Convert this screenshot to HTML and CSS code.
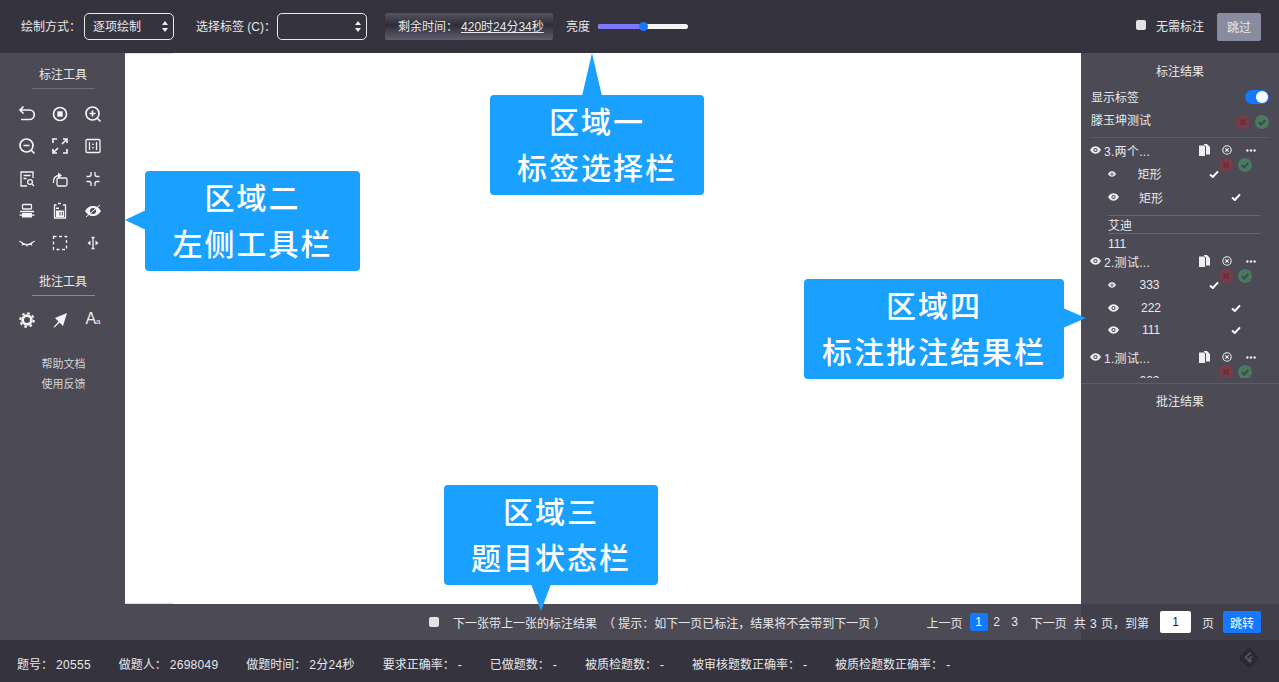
FILE: index.html
```html
<!DOCTYPE html>
<html lang="zh-CN">
<head>
<meta charset="utf-8">
<title>标注工具</title>
<link rel="stylesheet" href="styles.css">
</head>
<body>
<svg class="defs" width="0" height="0" aria-hidden="true">
  <symbol id="eye" viewBox="0 0 12 8"><path d="M0 4C2 .8 4 0 6 0s4 .8 6 4c-2 3.2-4 4-6 4S2 7.200 0 4z" fill="#eee"/><circle cx="6" cy="4" r="2.300" fill="#4b4a55"/><circle cx="6" cy="4" r="1.200" fill="#eee"/></symbol>
  <symbol id="check" viewBox="0 0 10 8"><path d="M1 4.500l2.800 2.500L9 1.300" fill="none" stroke="#fff" stroke-width="2"/></symbol>
  <symbol id="copy" viewBox="0 0 11 12"><path d="M0 1.500h5l1 1V12H0z" fill="#eee"/><path d="M5 0h3l3 3v7.500H7V2.500L5 1z" fill="#eee"/></symbol>
  <symbol id="close" viewBox="0 0 10 10"><circle cx="5" cy="5" r="4.200" fill="none" stroke="#eee" stroke-width="1.100"/><path d="M3.300 3.300l3.400 3.400M6.700 3.300l-3.400 3.400" stroke="#eee" stroke-width="1.200"/></symbol>
  <symbol id="more" viewBox="0 0 10 3"><circle cx="1.400" cy="1.500" r="1.200" fill="#eee"/><circle cx="5" cy="1.500" r="1.200" fill="#eee"/><circle cx="8.600" cy="1.500" r="1.200" fill="#eee"/></symbol>
  <symbol id="no" viewBox="0 0 14 14"><circle cx="7" cy="7" r="7" fill="#7c3a46"/><path d="M4.500 4.500l5 5M9.500 4.500l-5 5" stroke="#5a3640" stroke-width="2"/></symbol>
  <symbol id="yes" viewBox="0 0 14 14"><circle cx="7" cy="7" r="7" fill="#4c7a60"/><path d="M3.800 7.200l2.300 2.300 4.200-4.500" fill="none" stroke="#3b4a48" stroke-width="2"/></symbol>
</svg>

<div class="app">
  <header class="topbar">
    <span class="label">绘制方式：</span>
    <div class="select select-mode"><span>逐项绘制</span><i class="updown"></i></div>
    <span class="label label-tag">选择标签 (C)：</span>
    <div class="select select-tag"><span></span><i class="updown"></i></div>
    <div class="timer"><span>剩余时间：</span><u>420时24分34秒</u></div>
    <span class="label label-light">亮度</span>
    <div class="slider"><div class="slider-fill"></div><div class="slider-knob"></div></div>
    <div class="spacer"></div>
    <span class="check-box"></span>
    <span class="label label-none">无需标注</span>
    <button class="skip">跳过</button>
  </header>

  <main class="workspace">
    <aside class="left">
      <div class="tool-title">标注工具</div>
      <div class="tools">
        <svg class="ti" viewBox="0 0 18 18"><path d="M5.500 1.500L2 5l3.500 3.500M2 5h9.500a4.500 4.500 0 0 1 0 9.500H3"/></svg>
        <svg class="ti" viewBox="0 0 18 18"><circle cx="9" cy="9" r="6.500"/><rect class="f" x="6.300" y="6.300" width="5.400" height="5.400"/></svg>
        <svg class="ti" viewBox="0 0 18 18"><circle cx="8.500" cy="8.500" r="6.500"/><path d="M8.500 5.500v6M5.500 8.500h6M13 13l3.500 3.500"/></svg>
        <svg class="ti" viewBox="0 0 18 18"><circle cx="8.500" cy="8.500" r="6.500"/><path d="M5.500 8.500h6M13 13l3.500 3.500"/></svg>
        <svg class="ti" viewBox="0 0 18 18"><path d="M2 6V2h4M12 2h4v4M16 12v4h-4M6 16H2v-4M11 7l4-4M7 11l-4 4"/></svg>
        <svg class="ti ti-thin" viewBox="0 0 18 18"><rect x="2" y="2.500" width="14" height="13" rx="1"/><path d="M5.500 5v8M12.500 5v8"/><path class="d" d="M9 6.500v1.500M9 10v1.500"/></svg>
        <svg class="ti ti-thin" viewBox="0 0 18 18"><path d="M15 8V2H3v14h6M5.500 5.500h7M5.500 8.500h3"/><circle cx="12" cy="12" r="2.400"/><path d="M14 14l2 2"/></svg>
        <svg class="ti ti-thin" viewBox="0 0 18 18"><rect x="6" y="8" width="10" height="8" rx="1.500"/><path d="M2.500 13v-2a6 6 0 0 1 5-5.500"/><path class="f" d="M7 2.500L11 5.500 7 8.200z"/></svg>
        <svg class="ti ti-thin" viewBox="0 0 18 18"><path d="M7 2v2.500a2 2 0 0 1-2 2H2.500M11 2v2.500a2 2 0 0 0 2 2h2.500M7 16v-2.500a2 2 0 0 0-2-2H2.500M11 16v-2.500a2 2 0 0 1 2-2h2.500"/></svg>
        <svg class="ti ti-thin" viewBox="0 0 18 18"><rect x="4.500" y="2.500" width="9" height="4.500" rx=".8"/><rect class="f" x="4" y="11" width="10" height="4.500"/><path d="M2 9.500h14M1.500 13.200h15"/></svg>
        <svg class="ti ti-thin" viewBox="0 0 18 18"><path d="M7 1.500h3M3.500 5V3h2M12 3h2.500v13h-11V5"/><path class="f" d="M5 5.500h3V7H5zM5 8.500h8V15H5z"/><rect class="hole" x="8.500" y="10" width="1" height="3.500"/><rect class="hole" x="10.800" y="10" width="1" height="3.500"/></svg>
        <svg class="ti" viewBox="0 0 18 18"><path class="f" d="M1 9c2.500-4 5-5 8-5s5.500 1 8 5c-2.500 4-5 5-8 5s-5.500-1-8-5z"/><circle class="hole" cx="9" cy="9" r="3"/><path class="thin-line" d="M2 15L16 3"/></svg>
        <svg class="ti ti-thin" viewBox="0 0 18 18"><path d="M3 8c3 3.600 9 3.600 12 0M2.500 8L1.500 7M15.500 8l1-1M5 10.200l-.8 1.200M13 10.200l.8 1.200M9 11.200v1.300"/></svg>
        <svg class="ti ti-thin" viewBox="0 0 18 18"><path class="dash" d="M2.500 2.500h13v13h-13z"/></svg>
        <svg class="ti ti-thin" viewBox="0 0 18 18"><path d="M9 3.500v11M7.500 3.500h3M7.500 14.500h3"/><path class="f" d="M6.500 6.500L3.500 9l3 2.500zM11.500 6.500L14.500 9l-3 2.500z"/></svg>
      </div>
      <div class="tool-title tool-title-second">批注工具</div>
      <div class="tools tools-second">
        <svg class="ti" viewBox="0 0 18 18"><circle class="gear-teeth" cx="9" cy="9" r="6.800"/><circle class="gear-ring" cx="9" cy="9" r="4.400"/></svg>
        <svg class="ti" viewBox="0 0 18 18"><path class="f" d="M16 2L4 7l3.500 3.500L2.500 16l1 .5 5-5L12 15z"/></svg>
        <span class="aa">A<small>a</small></span>
      </div>
      <a class="help help-first">帮助文档</a>
      <a class="help">使用反馈</a>
    </aside>

    <section class="canvas"></section>

    <aside class="right">
      <div class="right-title">标注结果</div>
      <div class="switch-row"><span>显示标签</span><span class="toggle"></span></div>
      <div class="owner-row"><span>滕玉坤测试</span>
        <span class="marks"><svg class="mark"><use href="#no"/></svg><svg class="mark"><use href="#yes"/></svg></span></div>
      <div class="tree">
        <div class="group">
          <div class="head"><svg class="eye"><use href="#eye"/></svg><span class="head-name">3.两个...</span><svg class="a-copy"><use href="#copy"/></svg><svg class="a-close"><use href="#close"/></svg><svg class="a-more"><use href="#more"/></svg></div>
          <span class="group-marks"><svg class="mark"><use href="#no"/></svg><svg class="mark"><use href="#yes"/></svg></span>
          <div class="row row-first"><svg class="eye-s"><use href="#eye"/></svg><span class="name">矩形</span><svg class="tick"><use href="#check"/></svg></div>
          <div class="row row-next"><svg class="eye"><use href="#eye"/></svg><span class="name">矩形</span><svg class="tick"><use href="#check"/></svg></div>
          <div class="meta meta-line">艾迪</div>
          <div class="meta meta-short">111</div>
        </div>
        <div class="group">
          <div class="head"><svg class="eye"><use href="#eye"/></svg><span class="head-name">2.测试...</span><svg class="a-copy"><use href="#copy"/></svg><svg class="a-close"><use href="#close"/></svg><svg class="a-more"><use href="#more"/></svg></div>
          <span class="group-marks"><svg class="mark"><use href="#no"/></svg><svg class="mark"><use href="#yes"/></svg></span>
          <div class="row row-first"><svg class="eye-s"><use href="#eye"/></svg><span class="name">333</span><svg class="tick"><use href="#check"/></svg></div>
          <div class="row row-next"><svg class="eye"><use href="#eye"/></svg><span class="name">222</span><svg class="tick"><use href="#check"/></svg></div>
          <div class="row row-next row-tight"><svg class="eye"><use href="#eye"/></svg><span class="name">111</span><svg class="tick"><use href="#check"/></svg></div>
        </div>
        <div class="group group-last">
          <div class="head"><svg class="eye"><use href="#eye"/></svg><span class="head-name">1.测试...</span><svg class="a-copy"><use href="#copy"/></svg><svg class="a-close"><use href="#close"/></svg><svg class="a-more"><use href="#more"/></svg></div>
          <span class="group-marks"><svg class="mark"><use href="#no"/></svg><svg class="mark"><use href="#yes"/></svg></span>
          <div class="row row-first"><svg class="eye-s"><use href="#eye"/></svg><span class="name">222</span><svg class="tick"><use href="#check"/></svg></div>
        </div>
      </div>
      <div class="note-title">批注结果</div>
    </aside>

    <div class="pager">
      <span class="check-box"></span>
      <span class="carry">下一张带上一张的标注结果</span>
      <span class="hint">（ 提示：如下一页已标注，结果将不会带到下一页 ）</span>
      <span class="spacer"></span>
      <span class="pg-text">上一页</span>
      <span class="pg-num pg-on">1</span>
      <span class="pg-num">2</span>
      <span class="pg-num">3</span>
      <span class="pg-text pg-next">下一页</span>
      <span class="pg-total">共 3 页，到第</span>
      <span class="pg-input">1</span>
      <span class="pg-unit">页</span>
      <button class="pg-go">跳转</button>
    </div>

    <div class="callout callout-top"><div>区域一</div><div>标签选择栏</div></div>
    <div class="callout callout-left"><div>区域二</div><div>左侧工具栏</div></div>
    <div class="callout callout-bottom"><div>区域三</div><div>题目状态栏</div></div>
    <div class="callout callout-right"><div>区域四</div><div>标注批注结果栏</div></div>
  </main>

  <footer class="footer">
    <span class="stat"><span>题号：</span><b>20555</b></span>
    <span class="stat"><span>做题人：</span><b>2698049</b></span>
    <span class="stat"><span>做题时间：</span><b>2分24秒</b></span>
    <span class="stat"><span>要求正确率：</span><b>-</b></span>
    <span class="stat"><span>已做题数：</span><b>-</b></span>
    <span class="stat"><span>被质检题数：</span><b>-</b></span>
    <span class="stat"><span>被审核题数正确率：</span><b>-</b></span>
    <span class="stat"><span>被质检题数正确率：</span><b>-</b></span>
    <svg class="logo" viewBox="0 0 24 24"><rect x="4.500" y="4.500" width="15" height="15" rx="2" transform="rotate(45 12 12)" fill="#2b2a32"/><path d="M13.500 6.500L8.500 11.500l5 5M15 10.500l-3 2.500 3 2.500" fill="none" stroke="#5a5964" stroke-width="1.500"/></svg>
  </footer>
</div>
</body>
</html>
```
FILE: styles.css
```css
* { box-sizing: border-box; }
html, body { margin: 0; height: 100%; }
body {
  font-family: "Liberation Sans", "Noto Sans CJK SC", sans-serif;
  font-size: 12px;
  color: #e8e8ea;
  background: #35333e;
  overflow: hidden;
}
.defs { position: absolute; }
.app { height: 682px; display: flex; flex-direction: column; }
.spacer { flex: 1; }

/* top bar */
.topbar {
  height: 53px;
  flex: none;
  display: flex;
  align-items: center;
  padding: 0 18px 0 21px;
  background: #35333e;
}
.label { white-space: nowrap; margin-top: -2px; }
.select {
  width: 90px;
  height: 27px;
  margin-left: 3px;
  padding: 0 8px;
  display: flex;
  align-items: center;
  justify-content: space-between;
  border: 1px solid #e8e8ea;
  border-radius: 5px;
}
.select span { margin-top: -2px; }
.label-tag { margin-left: 22px; }
.select-tag { margin-left: 1px; }
.updown { display: block; width: 6px; height: 11px; margin-right: -3px; position: relative; }
.updown::before, .updown::after {
  content: "";
  position: absolute;
  left: 0;
  border-left: 3px solid transparent;
  border-right: 3px solid transparent;
}
.updown::before { top: 0; border-bottom: 4px solid #eee; }
.updown::after { bottom: 0; border-top: 4px solid #eee; }
.timer {
  width: 168px;
  height: 27px;
  margin-left: 18px;
  padding: 0 0 2px 13px;
  display: flex;
  align-items: center;
  gap: 3px;
  border-radius: 2px;
  background: linear-gradient(#55535f 0%, #2f2e38 45%, #4a4856 75%, #605e70 100%);
}
.label-light { margin-left: 13px; }
.slider { width: 90px; height: 5px; margin-left: 8px; position: relative; background: #f4f4f4; border-radius: 3px; }
.slider-fill { width: 46px; height: 5px; background: #7b78ff; border-radius: 3px 0 0 3px; }
.slider-knob { position: absolute; left: 41px; top: -2px; width: 9px; height: 9px; border-radius: 50%; background: #1677ff; }
.check-box { width: 10px; height: 10px; flex: none; background: #e3e3e3; border-radius: 2px; }
.topbar .check-box { margin-top: -3px; }
.label-none { margin-left: 10px; }
.skip {
  width: 44px;
  height: 28px;
  margin-left: 13px;
  padding: 0;
  border: 0;
  border-radius: 2px;
  color: #e8e8ea;
  background: #878ca0;
  font: inherit;
}

/* work area */
.workspace {
  position: relative;
  height: 587px;
  flex: none;
  display: grid;
  grid-template-columns: 125px 956px 198px;
  grid-template-rows: 551px 36px;
}
.left { grid-row: 1 / 3; background: #4b4a55; display: flex; flex-direction: column; align-items: center; }
.tool-title {
  width: 63px;
  margin: 14px 0 0 1px;
  height: 22px;
  line-height: 17px;
  text-align: center;
  border-bottom: 1px solid #6e6d78;
}
.tool-title-second { margin-top: 15px; border-bottom-color: #8a8993; }
.tools {
  width: 99px;
  margin: 9px 5px 0 0;
  display: grid;
  grid-template-columns: repeat(3, 33px);
  grid-auto-rows: 32.25px;
  place-items: center;
}
.tools-second { margin-top: 8px; margin-bottom: 17px; }
.ti { width: 18px; height: 18px; fill: none; stroke: #f4f4f4; stroke-width: 1.700; }
.ti-thin { stroke-width: 1.300; }
.ti .f { fill: #f4f4f4; stroke: none; }
.ti .hole { fill: #4b4a55; stroke: none; }
.ti .d { stroke-width: 1.500; }
.ti .dash { stroke-dasharray: 3 2.500; }
.ti .thin-line { stroke-width: 1; }
.ti .gear-teeth { stroke-width: 2; stroke-dasharray: 2.670 2.670; }
.ti .gear-ring { stroke-width: 2.800; }
.aa { font-size: 16px; line-height: 18px; color: #eee; }
.aa small { font-size: 8px; }
.help { display: block; height: 20px; line-height: 20px; margin-left: 2px; font-size: 11px; color: #d4d4d8; }

.canvas { background: #fff; position: relative; }
.canvas::before, .canvas::after {
  content: "";
  position: absolute;
  left: 0;
  width: 48px;
  height: 1px;
  background: #dcdcdf;
}
.canvas::before { top: 0; }
.canvas::after { bottom: 0; }

/* results panel */
.right { background: #4b4a55; padding-left: 10px; display: flex; flex-direction: column; }
.right-title { height: 36px; line-height: 38px; text-align: center; padding-right: 10px; }
.switch-row {
  height: 15px;
  padding-right: 10px;
  display: flex;
  align-items: center;
  justify-content: space-between;
}
.owner-row {
  height: 34px;
  margin-right: 10px;
  padding: 2px 0 4px;
  position: relative;
  display: flex;
  align-items: center;
  border-bottom: 1px solid #5d5c67;
}
.toggle { width: 24px; height: 14px; border-radius: 7px; background: #1677ff; position: relative; }
.toggle::after { content: ""; position: absolute; right: 1px; top: 1px; width: 12px; height: 12px; border-radius: 50%; background: #fff; }
.marks { position: absolute; left: 145px; top: 11px; display: flex; gap: 5px; }
.mark { width: 14px; height: 14px; display: block; }
.tree { height: 241px; margin: -1px 0 0 -10px; overflow: hidden; flex: none; }
.group { position: relative; }
.head { height: 26px; padding-left: 9px; display: flex; align-items: center; }
.head-name { margin-left: 3px; width: 95px; letter-spacing: .3px; }
.eye { width: 11px; height: 8px; flex: none; }
.eye-s { width: 8px; height: 6px; flex: none; }
.a-copy { width: 11px; height: 12px; flex: none; }
.a-close { width: 10px; height: 10px; margin-left: 12px; flex: none; }
.a-more { width: 10px; height: 3px; margin-left: 14px; flex: none; }
.group-marks { position: absolute; left: 138px; top: 21px; display: flex; gap: 5px; }
.row { display: flex; align-items: center; margin-left: 27px; }
.row-first { height: 21px; }
.row-first .name { width: 67px; text-align: center; }
.row-first .tick { margin-left: 26px; }
.row-next { height: 24px; margin-top: 1px; }
.row-next .name { width: 64px; text-align: center; }
.row-next .tick { margin-left: 48px; }
.row-tight { height: 20px; margin-top: 0; }
.tick { width: 10px; height: 8px; flex: none; }
.name { display: block; }
.meta { margin: 0 19px 0 27px; line-height: 17px; }
.meta-line { margin-top: 6px; height: 19px; padding-top: 1px; line-height: 18px; border-top: 1px solid #65646f; border-bottom: 1px solid #65646f; }
.meta-short { height: 14px; line-height: 20px; }
.group-last { margin-top: 4px; }
.note-title {
  margin: 5px 0 0 -10px;
  height: 36px;
  line-height: 36px;
  text-align: center;
  border-top: 1px solid #5d5c67;
}

/* pager */
.pager {
  grid-column: 2 / 4;
  display: flex;
  align-items: center;
  padding: 0 18px 0 304px;
  background: linear-gradient(90deg, #4b4a55 956px, #403f4a 956px);
}
.carry { margin-left: 14px; }
.hint { margin-left: 6px; }
.pg-num { width: 18px; height: 18px; line-height: 18px; text-align: center; border-radius: 2px; }
.pg-on { margin-left: 7px; color: #fff; background: #1677ff; }
.pg-next { margin-left: 7px; }
.pg-total { margin-left: 7px; word-spacing: 1px; }
.pg-input { width: 31px; height: 22px; margin-left: 11px; line-height: 22px; text-align: center; color: #222; background: #fff; border-radius: 2px; }
.pg-unit { margin-left: 11px; }
.pg-go { width: 38px; height: 22px; margin-left: 9px; padding: 0; border: 0; border-radius: 2px; color: #fff; background: #1677ff; font: inherit; }

/* callouts */
.callout {
  position: absolute;
  height: 100px;
  padding-top: 5px;
  text-align: center;
  color: #fff;
  font-size: 30px;
  font-weight: 500;
  line-height: 46px;
  letter-spacing: 2px;
  background: #1aa0ff;
  border-radius: 4px;
}
.callout::after { content: ""; position: absolute; background: #1aa0ff; }
.callout-top { left: 490px; top: 42px; width: 214px; }
.callout-top::after { left: 92px; top: -42px; width: 20px; height: 43px; clip-path: polygon(50% 0, 100% 100%, 0 100%); }
.callout-left { left: 145px; top: 118px; width: 215px; }
.callout-left::after { left: -20px; top: 39px; width: 21px; height: 20px; clip-path: polygon(0 50%, 100% 0, 100% 100%); }
.callout-bottom { left: 444px; top: 432px; width: 214px; }
.callout-bottom::after { left: 87px; bottom: -26px; width: 20px; height: 27px; clip-path: polygon(0 0, 100% 0, 50% 100%); }
.callout-right { left: 804px; top: 226px; width: 260px; }
.callout-right::after { right: -22px; top: 29px; width: 23px; height: 20px; clip-path: polygon(0 0, 100% 50%, 0 100%); }

/* footer */
.footer {
  flex: 1;
  position: relative;
  display: flex;
  align-items: center;
  gap: 27.800px;
  padding: 4px 0 0 17px;
  background: #35333e;
}
.stat { display: flex; align-items: baseline; gap: 3px; white-space: nowrap; }
.stat b { font-weight: 400; letter-spacing: .3px; }
.logo { position: absolute; right: 18px; top: 6px; width: 24px; height: 24px; }
```
